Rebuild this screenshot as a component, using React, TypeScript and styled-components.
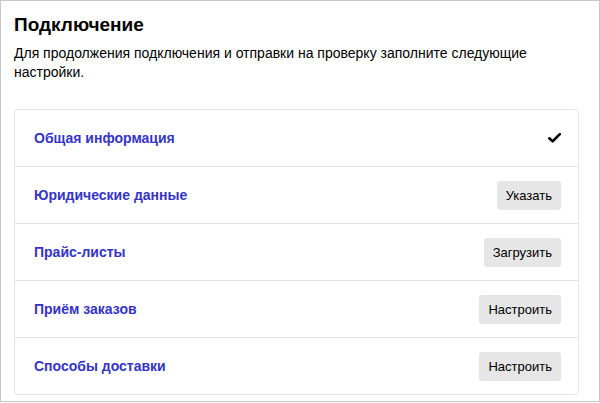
import React, { FC } from "react";
import styled, { createGlobalStyle } from "styled-components";

const GlobalStyle = createGlobalStyle`
  html, body {
    margin: 0;
    padding: 0;
    background: #ffffff;
  }
  body {
    font-family: "Liberation Sans", Arial, sans-serif;
    color: #000000;
  }
`;

type Step = {
  title: string;
  done?: boolean;
  action?: string;
};

const steps: Step[] = [
  { title: "Общая информация", done: true },
  { title: "Юридические данные", action: "Указать" },
  { title: "Прайс-листы", action: "Загрузить" },
  { title: "Приём заказов", action: "Настроить" },
  { title: "Способы доставки", action: "Настроить" }
];

const Frame = styled.div`
  box-sizing: border-box;
  width: 600px;
  height: 402px;
  border: 1px solid #c8c8c8;
  padding: 12px 20px 0 13px;
`;

const Title = styled.h1`
  margin: 0;
  font-size: 19px;
  line-height: 24px;
  font-weight: bold;
`;

const Description = styled.p`
  margin: 7px 0 0;
  font-size: 14px;
  line-height: 19px;
`;

const Card = styled.div`
  margin-top: 27px;
  border: 1px solid #e4e4e4;
  border-radius: 4px;
`;

const Row = styled.div`
  display: flex;
  align-items: center;
  justify-content: space-between;
  height: 56px;
  padding: 0 17px 0 19px;
  & + & {
    border-top: 1px solid #e4e4e4;
  }
`;

const StepLink = styled.a`
  font-size: 14px;
  font-weight: bold;
  color: #3434c8;
  text-decoration: none;
  cursor: pointer;
`;

const ActionButton = styled.button`
  height: 29px;
  padding: 0 9px;
  border: none;
  border-radius: 3px;
  background: #e6e6e6;
  font-family: "Liberation Sans", Arial, sans-serif;
  font-size: 13px;
  color: #000000;
  cursor: pointer;
`;

const Check: FC = () => (
  <svg width="13" height="10" viewBox="0 0 13 10">
    <path d="M1.3 5.3 L4.6 8.4 L11.8 1.2" fill="none" stroke="#000" strokeWidth="2.6" strokeLinecap="round" strokeLinejoin="round" />
  </svg>
);

const App: FC = () => (
  <>
    <GlobalStyle />
    <Frame>
      <Title>Подключение</Title>
      <Description>
        Для продолжения подключения и отправки на проверку заполните следующие настройки.
      </Description>
      <Card>
        {steps.map(step => (
          <Row key={step.title}>
            <StepLink>{step.title}</StepLink>
            {step.done ? <Check /> : <ActionButton>{step.action}</ActionButton>}
          </Row>
        ))}
      </Card>
    </Frame>
  </>
);

export default App;
